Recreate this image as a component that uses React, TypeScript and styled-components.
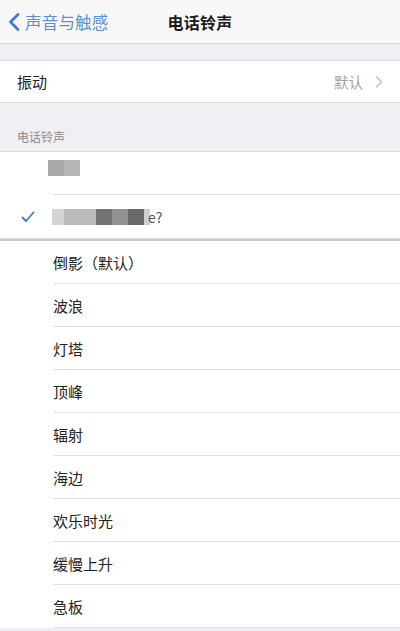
import styled, { createGlobalStyle } from 'styled-components'

const GlobalStyle = createGlobalStyle`
  html, body {
    margin: 0;
    padding: 0;
    background: #efeff4;
  }
  body {
    font-family: "Noto Sans CJK SC", "Noto Sans", sans-serif;
    color: #1f1f1f;
  }
`

const tones = ['倒影（默认）', '波浪', '灯塔', '顶峰', '辐射', '海边', '欢乐时光', '缓慢上升', '急板']

type Block = { w: number; c: string }

const firstBlur: Block[] = [
  { w: 16, c: '#a9a9a9' },
  { w: 16, c: '#b7b7b7' },
]

const secondBlur: Block[] = [
  { w: 12, c: '#d4d4d4' },
  { w: 32, c: '#bababa' },
  { w: 16, c: '#727272' },
  { w: 16, c: '#919191' },
  { w: 16, c: '#6a6a6a' },
  { w: 6, c: '#cfcfcf' },
]

const App = () => {
  return (
    <>
      <GlobalStyle />
      <Page>
        <NavBar>
          <BackButton>
            <svg width="12" height="18" viewBox="0 0 12 18">
              <path d="M10 1.5 L2.5 9 L10 16.5" fill="none" stroke="#3f78d6" strokeWidth="2.6" strokeLinecap="round" strokeLinejoin="round" />
            </svg>
            <BackLabel>声音与触感</BackLabel>
          </BackButton>
          <Title>电话铃声</Title>
        </NavBar>

        <Spacer />

        <Group>
          <Row>
            <RowLabel>振动</RowLabel>
            <RowValue>
              默认
              <svg width="8" height="12" viewBox="0 0 8 12">
                <path d="M1.5 1 L6.5 6 L1.5 11" fill="none" stroke="#c4c4c8" strokeWidth="1.6" strokeLinecap="round" strokeLinejoin="round" />
              </svg>
            </RowValue>
          </Row>
        </Group>

        <SectionHeader>电话铃声</SectionHeader>

        <Group>
          <ToneRow>
            <CheckSlot />
            <ToneBody>
              <Blur $offset>
                {firstBlur.map((b, i) => (
                  <Pixel key={i} style={{ width: b.w, background: b.c }} />
                ))}
              </Blur>
            </ToneBody>
          </ToneRow>
          <ToneRow>
            <CheckSlot>
              <svg width="14" height="12" viewBox="0 0 14 12">
                <path d="M1.5 6.5 L5 10 L12.5 1.5" fill="none" stroke="#3f78d6" strokeWidth="1.8" strokeLinecap="round" strokeLinejoin="round" />
              </svg>
            </CheckSlot>
            <ToneBody $noLine>
              <Blur>
                {secondBlur.map((b, i) => (
                  <Pixel key={i} style={{ width: b.w, background: b.c }} />
                ))}
                <BlurTail>e?</BlurTail>
              </Blur>
            </ToneBody>
          </ToneRow>
        </Group>

        <Divider />

        <List>
          {tones.map((t) => (
            <ToneRow key={t}>
              <CheckSlot />
              <ToneBody>
                <ToneName>{t}</ToneName>
              </ToneBody>
            </ToneRow>
          ))}
        </List>
      </Page>
    </>
  )
}

export default App

const Page = styled.div`
  width: 400px;
  min-height: 631px;
  background: #efeff4;
  overflow: hidden;
`

const NavBar = styled.div`
  position: relative;
  height: 43px;
  display: flex;
  align-items: center;
  justify-content: center;
  background: #f8f8f8;
  border-bottom: 1px solid #d9d9dc;
`

const BackButton = styled.div`
  position: absolute;
  left: 8px;
  top: 0;
  bottom: 0;
  display: flex;
  align-items: center;
  gap: 5px;
`

const BackLabel = styled.span`
  font-size: 16.5px;
  color: #5a8ed8;
  letter-spacing: 0.2px;
`

const Title = styled.div`
  font-size: 16px;
  font-weight: 700;
  color: #1a1a1a;
  letter-spacing: 0.3px;
`

const Spacer = styled.div`
  height: 16px;
`

const Group = styled.div`
  background: #fff;
  border-top: 1px solid #dcdcdf;
  border-bottom: 1px solid #dcdcdf;
`

const Row = styled.div`
  height: 41px;
  display: flex;
  align-items: center;
  justify-content: space-between;
  padding: 0 17px;
`

const RowLabel = styled.span`
  font-size: 15px;
  color: #222;
`

const RowValue = styled.span`
  display: flex;
  align-items: center;
  gap: 12px;
  font-size: 14.5px;
  color: #a3a3a6;
`

const SectionHeader = styled.div`
  height: 48px;
  box-sizing: border-box;
  display: flex;
  align-items: flex-end;
  padding: 0 17px 6px;
  font-size: 12px;
  color: #8a8a8e;
`

const ToneRow = styled.div`
  height: 43px;
  display: flex;
  align-items: stretch;
  background: #fff;
`

const CheckSlot = styled.div`
  width: 53px;
  flex-shrink: 0;
  display: flex;
  align-items: center;
  padding-left: 21px;
  box-sizing: border-box;
`

const ToneBody = styled.div<{ $noLine?: boolean }>`
  flex: 1;
  display: flex;
  align-items: center;
  border-bottom: ${(p) => (p.$noLine ? 'none' : '1px solid #e3e3e6')};
`

const ToneName = styled.span`
  font-size: 15px;
  color: #222;
`

const Blur = styled.div<{ $offset?: boolean }>`
  display: flex;
  align-items: center;
  height: 16px;
  margin-top: ${(p) => (p.$offset ? '-10px' : '0')};
  margin-left: ${(p) => (p.$offset ? '-5px' : '-1px')};
`

const Pixel = styled.div`
  height: 16px;
`

const BlurTail = styled.span`
  font-size: 14px;
  color: #555;
  margin-left: -2px;
`

const Divider = styled.div`
  height: 2px;
  background: #c9c9cc;
`

const List = styled.div`
  background: #fff;
`
